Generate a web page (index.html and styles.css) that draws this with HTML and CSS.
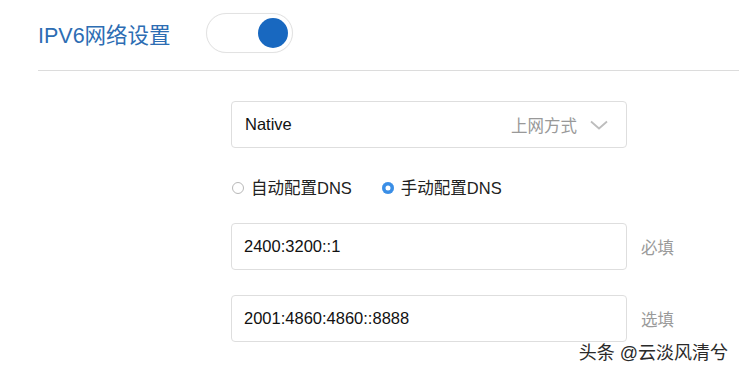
FILE: index.html
```html
<!DOCTYPE html>
<html lang="zh">
<head>
<meta charset="utf-8">
<link rel="stylesheet" href="styles.css">
</head>
<body>
<div class="page">
  <header class="head">
    <h1 class="title">IPV6网络设置</h1>
    <div class="toggle"><span class="knob"></span></div>
  </header>
  <main class="form">
    <div class="row">
      <div class="select">
        <span class="val">Native</span>
        <span class="hint">上网方式</span>
        <svg class="chev" width="18" height="10" viewBox="0 0 18 10"><path d="M1 1.5 L9 8.5 L17 1.5" fill="none" stroke="#bdbdbd" stroke-width="1.8"/></svg>
      </div>
    </div>
    <div class="radios">
      <label class="radio"><span class="dot"></span>自动配置DNS</label>
      <label class="radio on"><span class="dot"></span>手动配置DNS</label>
    </div>
    <div class="row">
      <div class="input"><span class="val">2400:3200::1</span></div>
      <span class="req">必填</span>
    </div>
    <div class="row r2">
      <div class="input"><span class="val">2001:4860:4860::8888</span></div>
      <span class="req">选填</span>
    </div>
  </main>
  <div class="mark">头条 @云淡风清兮</div>
</div>
</body>
</html>
```
FILE: styles.css
```css
* { box-sizing: border-box; }
html, body { margin: 0; padding: 0; background: #fff; }
body {
  font-family: "Liberation Sans", "Noto Sans CJK SC", sans-serif;
  width: 739px; height: 372px; overflow: hidden;
}
.page { position: relative; width: 739px; height: 372px; }
.head {
  display: flex; align-items: center;
  margin-left: 38px; height: 71px;
  border-bottom: 1px solid #dcdcdc;
  padding-bottom: 4px;
}
.title {
  margin: 0; font-weight: normal; font-size: 21.5px;
  color: #2d6db3; width: 168px;
}
.toggle {
  width: 87px; height: 40px; border-radius: 20px;
  border: 1px solid #e2e2e2; background: #fff;
  display: flex; align-items: center; justify-content: flex-end;
  padding-right: 4px;
  box-shadow: 0 0 1px rgba(0,0,0,0.05);
}
.knob {
  width: 30px; height: 30px; border-radius: 50%;
  background: #1868c0;
}
.form { margin-left: 231px; padding-top: 30px; }
.row { display: flex; align-items: center; }
.select, .input {
  width: 396px; height: 47px;
  border: 1px solid #dedede; border-radius: 4px;
  display: flex; align-items: center;
  padding: 0 18px 0 13px;
  font-size: 16.5px; color: #111;
}
.select .val { flex: 1; }
.hint { color: #999; font-size: 16.5px; margin-right: 13px; }
.chev { display: block; }
.radios {
  display: flex; gap: 30px; margin: 30px 0 25px 1px;
  font-size: 16.5px; color: #222; line-height: 20px;
}
.radio { display: flex; align-items: center; gap: 7px; }
.dot {
  width: 12px; height: 12px; border-radius: 50%;
  border: 1px solid #b8b8b8; background: #fff;
}
.on .dot {
  border: none; background: #3a8ee6;
  box-shadow: inset 0 0 0 3.5px #3a8ee6, inset 0 0 0 12px #fff;
}
.input { padding-left: 12px; }
.req { margin-left: 14px; color: #9a9a9a; font-size: 16.5px; }
.r2 { margin-top: 25px; }
.mark {
  position: absolute; right: 11px; bottom: 8px;
  font-size: 18px; color: #2a2a2a;
  text-shadow: 0 0 2px #fff, 0 0 2px #fff;
}
```
